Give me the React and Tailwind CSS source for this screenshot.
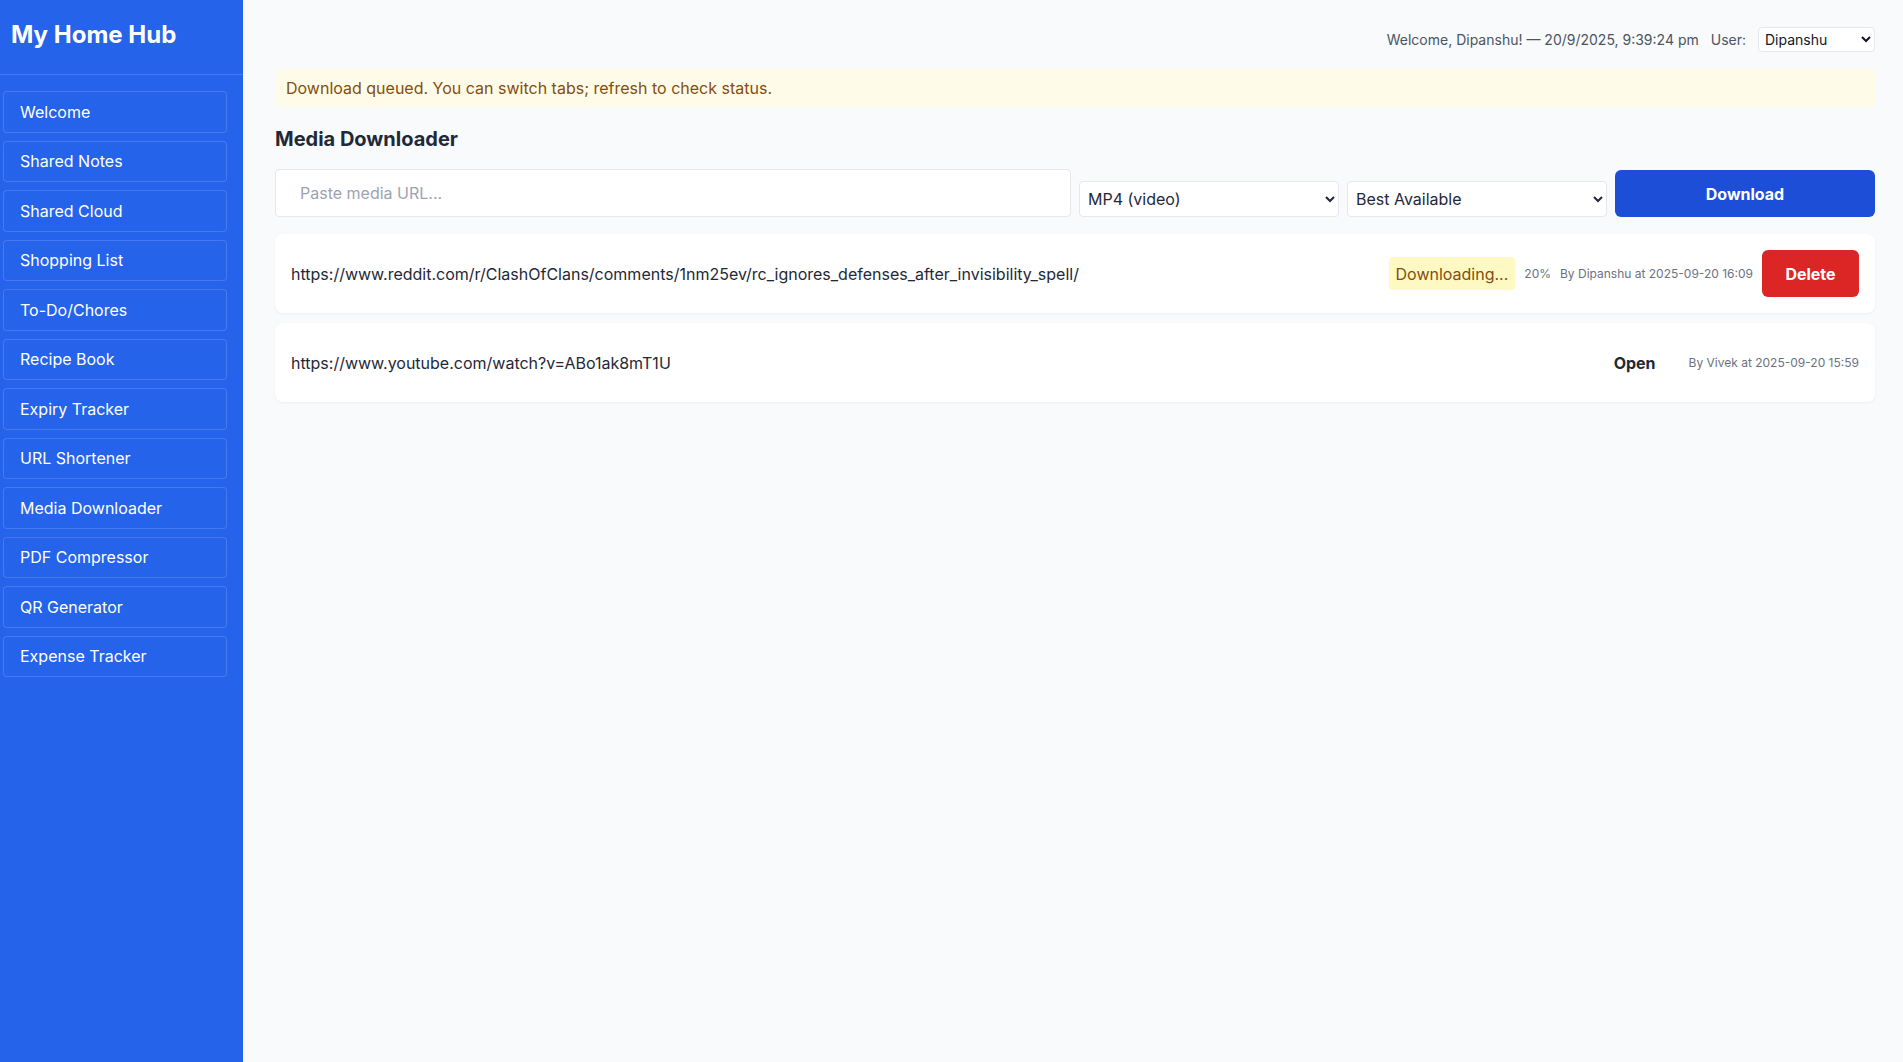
import React from 'react';

const NAV = [
  'Welcome',
  'Shared Notes',
  'Shared Cloud',
  'Shopping List',
  'To-Do/Chores',
  'Recipe Book',
  'Expiry Tracker',
  'URL Shortener',
  'Media Downloader',
  'PDF Compressor',
  'QR Generator',
  'Expense Tracker',
];

function Sidebar() {
  return (
    <aside className="w-[243px] shrink-0 min-h-screen bg-[#2563eb] text-white">
      <div className="h-[75px] pl-[11px] pt-[19px] border-b border-white/15">
        <h1 className="text-[24px] leading-[32px] font-bold">My Home Hub</h1>
      </div>
      <nav className="flex flex-col gap-[8px] pt-[16px] pl-[3px]">
        {NAV.map((item) => (
          <button
            key={item}
            className="w-[224px] h-[41.5px] text-left pl-[16px] text-[16px] text-white rounded-[4px] border border-white/15 bg-[#2563eb]"
          >
            {item}
          </button>
        ))}
      </nav>
    </aside>
  );
}

function JobCard({ url, children }) {
  return (
    <div className="bg-white rounded-[8px] shadow-[0_1px_3px_rgba(0,0,0,0.05)] h-[79px] px-[16px] flex items-center gap-[9px]">
      <div className="flex-1 text-[16px] text-[#1f2937] truncate">{url}</div>
      {children}
    </div>
  );
}

export default function App() {
  return (
    <div className="flex min-h-screen font-['Inter','Liberation_Sans',sans-serif]">
      <Sidebar />
      <main className="flex-1 bg-[#f8fafc] pl-[32px] pr-[28px] pt-[27px]">
        {/* header */}
        <div className="h-[25px] flex items-center justify-end gap-[12px] text-[14px] text-[#4b5563]">
          <span>Welcome, Dipanshu! — 20/9/2025, 9:39:24 pm</span>
          <span>User:</span>
          <select className="w-[117px] h-[25px] bg-white border border-[#e5e7eb] rounded-[4px] pl-[2px] text-[14px] text-[#111827]">
            <option>Dipanshu</option>
            <option>Vivek</option>
          </select>
        </div>

        {/* notice */}
        <div className="mt-[17px] h-[38px] flex items-center px-[11px] rounded-[4px] bg-[#fefce8] text-[16px] text-[#854d0e]">
          Download queued. You can switch tabs; refresh to check status.
        </div>

        <h2 className="mt-[18px] text-[20px] leading-[28px] font-bold text-[#1f2937]">Media Downloader</h2>

        {/* form */}
        <div className="mt-[16px] flex items-end gap-[8px]">
          <input
            className="flex-1 h-[48px] bg-white border border-[#e5e7eb] rounded-[4px] pl-[24px] text-[16px] text-[#1f2937] placeholder:text-[#9ca3af] outline-none"
            placeholder="Paste media URL..."
          />
          <select className="w-[260px] h-[36px] bg-white border border-[#e5e7eb] rounded-[4px] pl-[4px] text-[16px] text-[#1f2937]">
            <option>MP4 (video)</option>
            <option>MP3 (audio)</option>
          </select>
          <select className="w-[260px] h-[36px] bg-white border border-[#e5e7eb] rounded-[4px] pl-[4px] text-[16px] text-[#1f2937]">
            <option>Best Available</option>
            <option>1080p</option>
            <option>720p</option>
          </select>
          <button className="w-[260px] h-[47px] bg-[#1d4ed8] text-white text-[16px] font-bold rounded-[6px]">
            Download
          </button>
        </div>

        {/* jobs */}
        <div className="mt-[17px] flex flex-col gap-[10px]">
          <JobCard url="https://www.reddit.com/r/ClashOfClans/comments/1nm25ev/rc_ignores_defenses_after_invisibility_spell/">
            <span className="h-[33px] px-[7px] flex items-center rounded-[4px] bg-[#fef9c3] text-[16px] text-[#854d0e]">
              Downloading...
            </span>
            <span className="text-[12px] text-[#6b7280]">20%</span>
            <span className="text-[12px] text-[#6b7280]">By Dipanshu at 2025-09-20 16:09</span>
            <button className="w-[97px] h-[47px] bg-[#dc2626] text-white text-[16px] font-bold rounded-[6px]">
              Delete
            </button>
          </JobCard>
          <JobCard url="https://www.youtube.com/watch?v=ABo1ak8mT1U">
            <button className="h-[47px] px-[24px] text-[16px] font-bold text-[#1f2937]">Open</button>
            <span className="text-[12px] text-[#6b7280]">By Vivek at 2025-09-20 15:59</span>
          </JobCard>
        </div>
      </main>
    </div>
  );
}
